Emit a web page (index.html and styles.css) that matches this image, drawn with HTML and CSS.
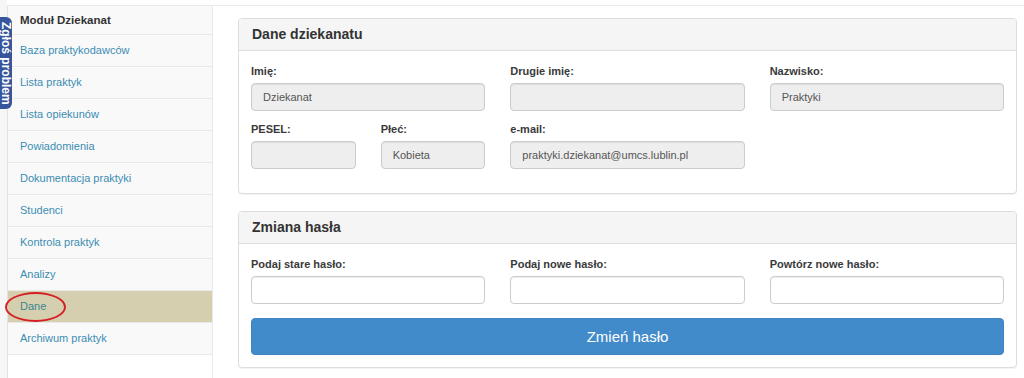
FILE: index.html
```html
<!DOCTYPE html>
<html lang="pl">
<head>
<meta charset="utf-8">
<title>Moduł Dziekanat – Dane</title>
<link rel="stylesheet" href="styles.css">
</head>
<body>
<div class="app">
  <div class="rail"></div>
  <aside class="sidebar">
    <div class="side-head">Moduł Dziekanat</div>
    <a class="side-link" href="#">Baza praktykodawców</a>
    <a class="side-link" href="#">Lista praktyk</a>
    <a class="side-link" href="#">Lista opiekunów</a>
    <a class="side-link" href="#">Powiadomienia</a>
    <a class="side-link" href="#">Dokumentacja praktyki</a>
    <a class="side-link" href="#">Studenci</a>
    <a class="side-link" href="#">Kontrola praktyk</a>
    <a class="side-link" href="#">Analizy</a>
    <a class="side-link active" href="#">Dane<span class="annot"></span></a>
    <a class="side-link" href="#">Archiwum praktyk</a>
  </aside>
  <main class="main">
    <section class="panel">
      <div class="panel-head">Dane dziekanatu</div>
      <div class="panel-body">
        <div class="grid">
          <div class="field">
            <label>Imię:</label>
            <div class="input disabled">Dziekanat</div>
          </div>
          <div class="field">
            <label>Drugie imię:</label>
            <div class="input disabled"></div>
          </div>
          <div class="field">
            <label>Nazwisko:</label>
            <div class="input disabled">Praktyki</div>
          </div>
          <div class="split">
            <div class="field">
              <label>PESEL:</label>
              <div class="input disabled"></div>
            </div>
            <div class="field">
              <label>Płeć:</label>
              <div class="input disabled">Kobieta</div>
            </div>
          </div>
          <div class="field">
            <label>e-mail:</label>
            <div class="input disabled">praktyki.dziekanat@umcs.lublin.pl</div>
          </div>
        </div>
      </div>
    </section>
    <section class="panel">
      <div class="panel-head">Zmiana hasła</div>
      <div class="panel-body pw">
        <div class="grid">
          <div class="field">
            <label>Podaj stare hasło:</label>
            <div class="input"></div>
          </div>
          <div class="field">
            <label>Podaj nowe hasło:</label>
            <div class="input"></div>
          </div>
          <div class="field">
            <label>Powtórz nowe hasło:</label>
            <div class="input"></div>
          </div>
        </div>
        <button class="btn" type="button">Zmień hasło</button>
      </div>
    </section>
  </main>
</div>
<a class="report-tab" href="#">Zgłoś problem</a>
</body>
</html>
```
FILE: styles.css
```css
* { box-sizing: border-box; }
html, body { margin: 0; padding: 0; }
body {
  width: 1024px;
  height: 378px;
  overflow: hidden;
  background: #fff;
  font-family: "Liberation Sans", Arial, sans-serif;
  color: #333;
}
.app {
  display: flex;
  height: 378px;
}
.rail {
  width: 7px;
  flex-shrink: 0;
  background: #f6f6f6;
}
.sidebar {
  width: 206px;
  flex-shrink: 0;
  margin-top: 5px;
  border-top: 1px solid #e9e9e9;
  border-left: 1px solid #e2e2e2;
  border-right: 1px solid #e9e9e9;
  background: #fff;
  display: flex;
  flex-direction: column;
}
.side-head {
  height: 29px;
  line-height: 28px;
  padding-left: 12px;
  font-size: 11.5px;
  font-weight: bold;
  color: #333;
  background: #f9f9f9;
  border-bottom: 1px solid #e9e9e9;
}
.side-link {
  position: relative;
  display: block;
  height: 32px;
  line-height: 31px;
  padding-left: 12px;
  font-size: 11px;
  color: #3b8db3;
  text-decoration: none;
  background: #f9f9f9;
  border-bottom: 1px solid #e9e9e9;
}
.side-link.active {
  background: #d6cfaf;
  color: #36888f;
}
.annot {
  position: absolute;
  left: -3px;
  top: 1px;
  width: 61px;
  height: 30px;
  border: 2px solid #d41f25;
  border-radius: 50%;
}
.main {
  flex: 1;
  margin-top: 5px;
  border-top: 1px solid #e9e9e9;
  padding: 12px 7px 0 25px;
}
.panel {
  border: 1px solid #dddddd;
  border-radius: 4px;
  background: #fff;
  box-shadow: 0 1px 1px rgba(0, 0, 0, 0.05);
  margin-bottom: 17px;
}
.panel-head {
  height: 32px;
  line-height: 31px;
  padding-left: 13px;
  font-size: 14px;
  font-weight: bold;
  color: #333;
  background: #f5f5f5;
  border-bottom: 1px solid #dddddd;
  border-radius: 3px 3px 0 0;
}
.panel-body {
  padding: 12px 12px 24px;
}
.panel-body.pw {
  padding-bottom: 12px;
}
.grid {
  display: grid;
  grid-template-columns: repeat(3, 1fr);
  column-gap: 25px;
  row-gap: 10px;
}
.split {
  display: grid;
  grid-template-columns: 1fr 1fr;
  column-gap: 25px;
}
.field label {
  display: block;
  height: 16px;
  line-height: 16px;
  margin-bottom: 4px;
  font-size: 11px;
  font-weight: bold;
  color: #3a3a3a;
}
.input {
  height: 28px;
  line-height: 26px;
  padding: 0 11px;
  font-size: 11px;
  color: #555;
  background: #fff;
  border: 1px solid #cccccc;
  border-radius: 4px;
  box-shadow: inset 0 1px 1px rgba(0, 0, 0, 0.075);
  white-space: nowrap;
  overflow: hidden;
}
.input.disabled {
  background: #eeeeee;
}
.btn {
  display: block;
  width: 100%;
  height: 37px;
  margin-top: 14px;
  border: 1px solid #3f84c1;
  border-radius: 4px;
  background: #428bca;
  color: #fff;
  font-family: "Liberation Sans", Arial, sans-serif;
  font-size: 15px;
  cursor: pointer;
}
.report-tab {
  position: absolute;
  left: 0;
  top: 17px;
  width: 12px;
  height: 92px;
  padding-top: 5px;
  background: #37559a;
  border-radius: 0 6px 6px 0;
  color: #fff;
  font-size: 12px;
  font-weight: bold;
  text-decoration: none;
  writing-mode: vertical-rl;
  line-height: 13px;
  overflow: hidden;
  white-space: nowrap;
}
```
